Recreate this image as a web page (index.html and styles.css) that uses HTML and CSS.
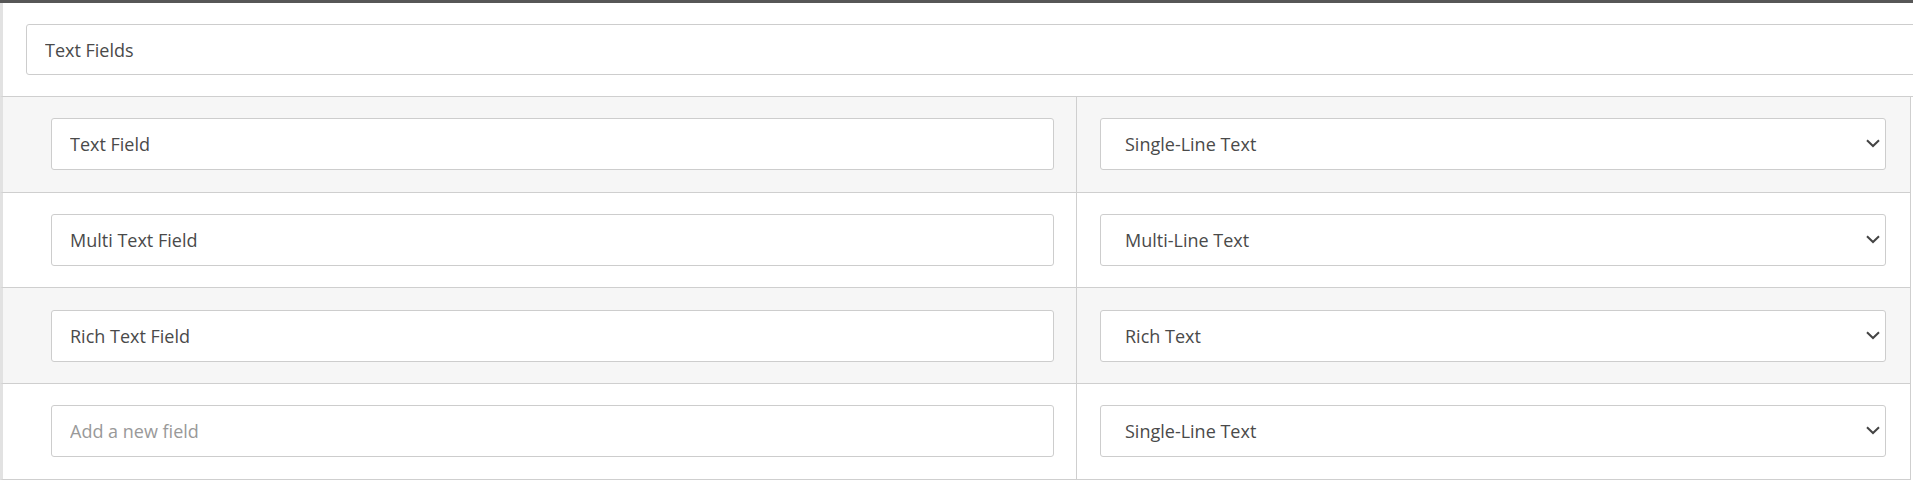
FILE: index.html
```html
<!DOCTYPE html>
<html>
<head>
<meta charset="utf-8">
<link rel="stylesheet" href="styles.css">
</head>
<body>
<div class="page">
  <div class="group-head">
    <input class="field group-name" type="text" value="Text Fields">
  </div>
  <div class="rows">
    <div class="row alt">
      <div class="cell name-cell"><input class="field" type="text" value="Text Field"></div>
      <div class="cell type-cell">
        <div class="select-wrap">
          <select class="field select"><option>Single-Line Text</option></select>
          <svg class="chevron" width="14" height="9" viewBox="0 0 14 9"><path d="M1 1.2 L7 7 L13 1.2" fill="none" stroke="#444" stroke-width="2"/></svg>
        </div>
      </div>
    </div>
    <div class="row">
      <div class="cell name-cell"><input class="field" type="text" value="Multi Text Field"></div>
      <div class="cell type-cell">
        <div class="select-wrap">
          <select class="field select"><option>Multi-Line Text</option></select>
          <svg class="chevron" width="14" height="9" viewBox="0 0 14 9"><path d="M1 1.2 L7 7 L13 1.2" fill="none" stroke="#444" stroke-width="2"/></svg>
        </div>
      </div>
    </div>
    <div class="row alt">
      <div class="cell name-cell"><input class="field" type="text" value="Rich Text Field"></div>
      <div class="cell type-cell">
        <div class="select-wrap">
          <select class="field select"><option>Rich Text</option></select>
          <svg class="chevron" width="14" height="9" viewBox="0 0 14 9"><path d="M1 1.2 L7 7 L13 1.2" fill="none" stroke="#444" stroke-width="2"/></svg>
        </div>
      </div>
    </div>
    <div class="row">
      <div class="cell name-cell"><input class="field" type="text" placeholder="Add a new field"></div>
      <div class="cell type-cell">
        <div class="select-wrap">
          <select class="field select"><option>Single-Line Text</option></select>
          <svg class="chevron" width="14" height="9" viewBox="0 0 14 9"><path d="M1 1.2 L7 7 L13 1.2" fill="none" stroke="#444" stroke-width="2"/></svg>
        </div>
      </div>
    </div>
  </div>
</div>
</body>
</html>
```
FILE: styles.css
```css
html, body {
  margin: 0;
  padding: 0;
  background: #fff;
  overflow: hidden;
}
body {
  font-family: "Open Sans", "Noto Sans", sans-serif;
  color: #4a4a4a;
  width: 1913px;
  height: 480px;
}
.page {
  border-top: 3px solid #575757;
  box-sizing: border-box;
  height: 480px;
}
.group-head {
  border-left: 3px solid #e2e2e2;
  padding: 21px 0 21px 23px;
  height: 94px;
  box-sizing: border-box;
  border-bottom: 1px solid #cfcfcf;
}
.field {
  font-family: "Open Sans", "Noto Sans", sans-serif;
  font-size: 18px;
  color: #4a4a4a;
  border: 1px solid #cdcdcd;
  border-radius: 3px;
  background: #fff;
  box-sizing: border-box;
  padding: 0 18px;
  outline: none;
  margin: 0;
}
.field::placeholder {
  color: #999;
}
.group-name {
  width: 1920px;
  height: 51px;
}
.rows {
  display: flex;
  flex-direction: column;
  width: 1911px;
}
.row {
  display: grid;
  grid-template-columns: 1074px 834px;
  border-left: 3px solid #e2e2e2;
  border-bottom: 1px solid #cfcfcf;
  height: 95.67px;
  box-sizing: border-box;
}
.row.alt {
  background: #f6f6f6;
}
.cell {
  display: flex;
  align-items: center;
  border-right: 1px solid #cfcfcf;
  box-sizing: border-box;
}
.name-cell {
  padding: 0 22px 0 48px;
}
.name-cell .field {
  width: 100%;
  height: 52px;
}
.type-cell {
  padding: 0 23px 0 23px;
}
.select-wrap {
  position: relative;
  width: 786px;
  height: 52px;
}
.select {
  -webkit-appearance: none;
  appearance: none;
  width: 100%;
  height: 52px;
  padding-left: 24px;
}
.chevron {
  position: absolute;
  right: 6px;
  top: 21px;
  pointer-events: none;
}
```
